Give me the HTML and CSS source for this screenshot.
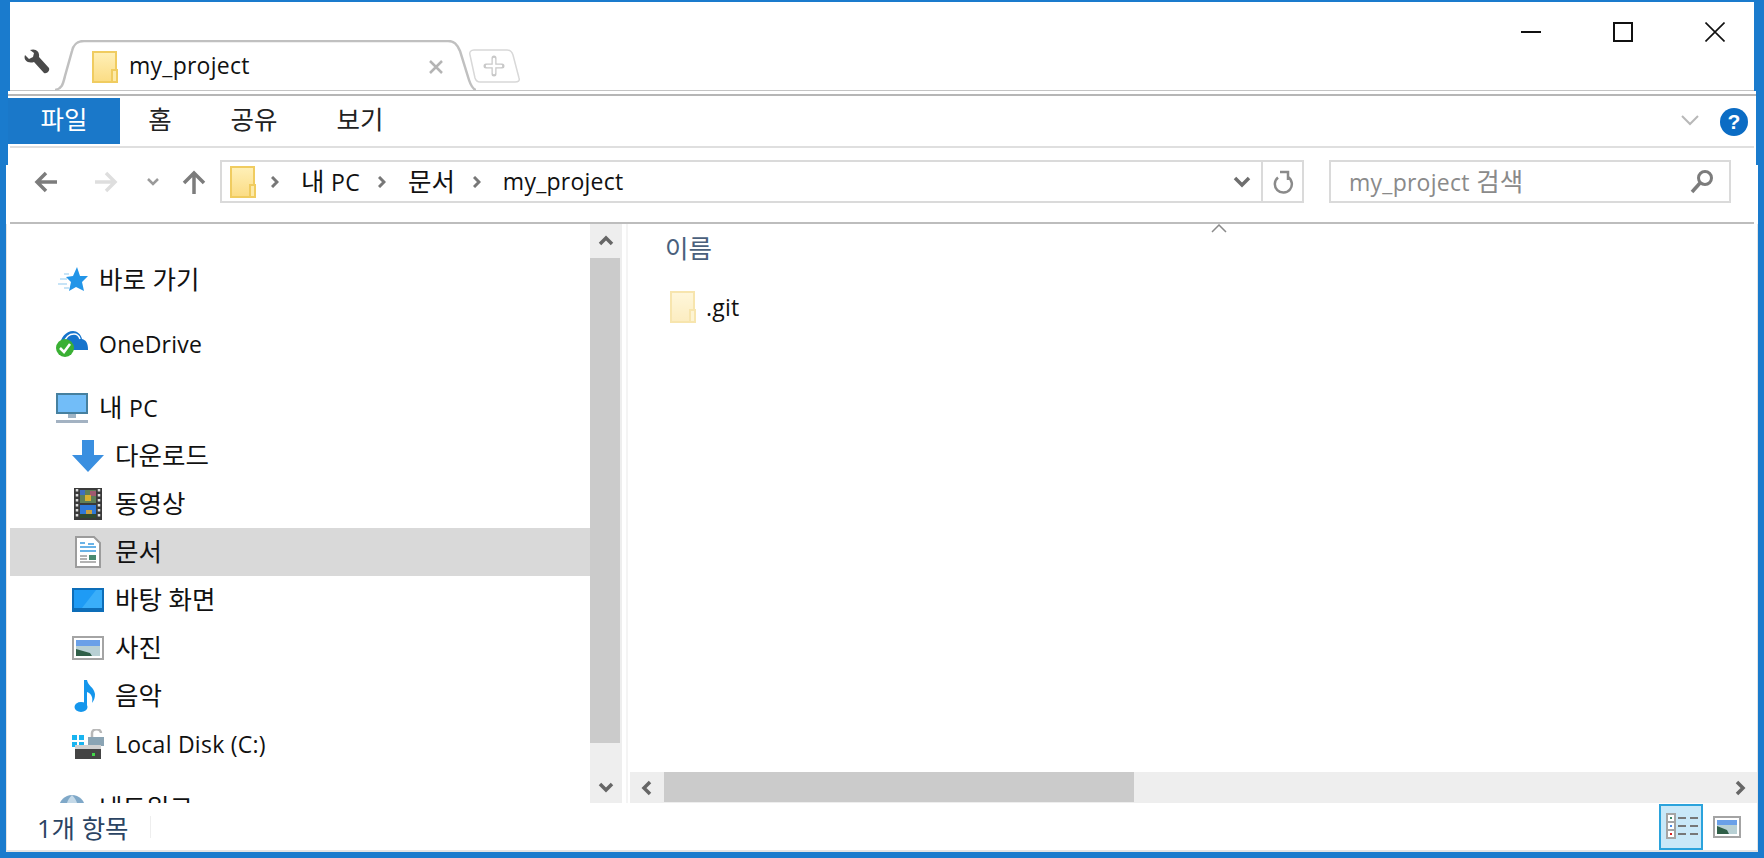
FILE: index.html

```html
<!DOCTYPE html>
<html lang="ko">
<head>
<meta charset="UTF-8" />
<title>my_project</title>
<link rel="stylesheet" href="styles.css">
</head>
<body>

<svg class="defs" width="0" height="0">
  <defs>
    <linearGradient id="folderFill" x1="0" y1="0" x2="0" y2="1">
      <stop offset="0" stop-color="#fff0b8" />
      <stop offset="1" stop-color="#fbdc84" />
    </linearGradient>
    <symbol id="folder" viewBox="0 0 26 32">
      <rect x="1" y="1" width="23" height="30" fill="url(#folderFill)" stroke="#f0cc60" stroke-width="2" />
      <rect x="20" y="19" width="5" height="12" fill="#fdeaa8" stroke="#f0cc60" stroke-width="2" />
    </symbol>
    <symbol id="up" viewBox="0 0 16 16"><polyline points="2,11 8,5 14,11" /></symbol>
    <symbol id="down" viewBox="0 0 16 16"><polyline points="2,5 8,11 14,5" /></symbol>
    <symbol id="left" viewBox="0 0 16 16"><polyline points="11,2 5,8 11,14" /></symbol>
    <symbol id="right" viewBox="0 0 16 16"><polyline points="5,2 11,8 5,14" /></symbol>
  </defs>
</svg>

<div class="window">

  <div class="titlebar">
    <svg class="wrench" width="28" height="28" viewBox="0 0 28 28">
      <path d="M3 7 L7 11 L11 9 L12 5 L8 2 C13 0 18 3 17 9 L27 20 C28 23 25 26 22 25 L12 14 C6 16 1 12 3 7 Z" fill="#4a4a4a" />
    </svg>
    <div class="tab">
      <svg class="tab-shape" width="421" height="51" viewBox="0 0 421 51">
        <path d="M0 50 C7 49 8 44 10 36 L17 11 C19 3 23 1 29 1 L393 1 C399 1 402 4 405 11 L414 40 C416 46 418 49 421 50" fill="#fff" stroke="#c0c0c0" stroke-width="2.5" />
      </svg>
      <svg class="folder-icon" width="26" height="32"><use href="#folder" /></svg>
      <span class="tab-title lat">my_project</span>
      <svg class="tab-close" width="14" height="14" viewBox="0 0 14 14">
        <path d="M1 1 L13 13 M13 1 L1 13" stroke="#b4b4b4" stroke-width="2.5" />
      </svg>
    </div>
    <svg class="new-tab" width="52" height="34" viewBox="0 0 52 34">
      <path d="M2 6 C1 3 3 1 6 1 L39 1 C42 1 44 3 45 6 L51 29 C52 32 50 33 47 33 L12 33 C9 33 8 32 7 29 Z" fill="#fff" stroke="#d8d8d8" stroke-width="1.5" />
      <path d="M26 9 L26 25 M18 17 L34 17" stroke="#c8c8c8" stroke-width="5" stroke-linecap="round" />
      <path d="M26 10 L26 24 M19 17 L33 17" stroke="#fff" stroke-width="2.5" stroke-linecap="round" />
    </svg>
    <div class="win-controls">
      <svg width="20" height="20" viewBox="0 0 20 20"><path d="M0 10 H20" stroke="#111" stroke-width="2" /></svg>
      <svg width="20" height="20" viewBox="0 0 20 20"><rect x="1" y="1" width="18" height="18" fill="none" stroke="#111" stroke-width="2" /></svg>
      <svg width="20" height="20" viewBox="0 0 20 20"><path d="M0.5 0.5 L19.5 19.5 M19.5 0.5 L0.5 19.5" stroke="#111" stroke-width="1.6" /></svg>
    </div>
  </div>

  <div class="strip-gap"></div>

  <div class="ribbon">
    <div class="ribbon-tab active">파일</div>
    <div class="ribbon-tab tab-home">홈</div>
    <div class="ribbon-tab tab-share">공유</div>
    <div class="ribbon-tab tab-view">보기</div>
    <svg class="ribbon-toggle" width="20" height="12" viewBox="0 0 20 12">
      <polyline points="2,2 10,10 18,2" fill="none" stroke="#b8b8b8" stroke-width="2" />
    </svg>
    <div class="help">?</div>
  </div>

  <div class="navbar">
    <svg class="back" width="24" height="22" viewBox="0 0 24 22">
      <path d="M23 11 H4 M12 2 L3 11 L12 20" fill="none" stroke="#7c7c7c" stroke-width="3.5" />
    </svg>
    <svg class="forward" width="24" height="22" viewBox="0 0 24 22">
      <path d="M1 11 H20 M12 2 L21 11 L12 20" fill="none" stroke="#dedede" stroke-width="3.5" />
    </svg>
    <svg class="recent" width="14" height="10" viewBox="0 0 14 10">
      <polyline points="2,2 7,7 12,2" fill="none" stroke="#9a9a9a" stroke-width="2.5" />
    </svg>
    <svg class="upward" width="24" height="24" viewBox="0 0 24 24">
      <path d="M12 24 V4 M2 13 L12 3 L22 13" fill="none" stroke="#7c7c7c" stroke-width="3.5" />
    </svg>

    <div class="address">
      <svg class="folder-icon" width="26" height="32"><use href="#folder" /></svg>
      <svg class="crumb-sep first" width="8" height="12" viewBox="0 0 8 12"><polyline points="1,1 6,6 1,11" /></svg>
      <span class="crumb">내 <span class="lat">PC</span></span>
      <svg class="crumb-sep" width="8" height="12" viewBox="0 0 8 12"><polyline points="1,1 6,6 1,11" /></svg>
      <span class="crumb">문서</span>
      <svg class="crumb-sep" width="8" height="12" viewBox="0 0 8 12"><polyline points="1,1 6,6 1,11" /></svg>
      <span class="crumb lat">my_project</span>
      <svg class="address-drop" width="18" height="12" viewBox="0 0 18 12">
        <polyline points="2,2 9,9 16,2" fill="none" stroke="#6e6e6e" stroke-width="3.5" />
      </svg>
      <div class="refresh">
        <svg width="22" height="24" viewBox="0 0 22 24">
          <path d="M16 7 A8.5 8.5 0 1 1 6 7.5" fill="none" stroke="#8a8a8a" stroke-width="2.5" />
          <path d="M8 2 H16 V10" fill="none" stroke="#8a8a8a" stroke-width="2.5" />
        </svg>
      </div>
    </div>

    <div class="search">
      <span class="search-text"><span class="lat">my_project</span> 검색</span>
      <svg width="24" height="26" viewBox="0 0 24 26">
        <circle cx="15" cy="9" r="6.5" fill="none" stroke="#7c7c7c" stroke-width="3" />
        <path d="M10 14 L2 23" stroke="#7c7c7c" stroke-width="3.5" />
      </svg>
    </div>
  </div>

  <div class="main">

    <div class="sidebar">
      <div class="tree-item group">
        <svg width="32" height="28" viewBox="0 0 32 28">
          <path d="M21 1 L24 10 L32 10 L26 16 L28 25 L20 21 L13 25 L15 16 L10 11 L17 10 Z" fill="#2295e8" />
          <path d="M13 8 H8 M11 13 H4 M11 18 H2 M13 22 H8" stroke="#b5dbf5" stroke-width="1.6" />
        </svg>
        <span>바로 가기</span>
      </div>
      <div class="tree-item group">
        <svg width="32" height="28" viewBox="0 0 32 28">
          <path d="M4 16 C4 8 10 1 17 1 C21 1 25 4 26 9 C30 10 32 13 32 20 H10 Z" fill="#1674cc" />
          <path d="M8 13 C10 6 14 4 18 4 C21 4 23 6 24 9" fill="none" stroke="#fff" stroke-width="1.5" />
          <circle cx="9" cy="18" r="9" fill="#3ab034" />
          <path d="M4 18 L8 22 L14 14" fill="none" stroke="#fff" stroke-width="2.5" />
        </svg>
        <span class="lat">OneDrive</span>
      </div>
      <div class="tree-item group">
        <svg width="32" height="30" viewBox="0 0 32 30">
          <rect x="1" y="1" width="30" height="19" fill="#72bdf8" stroke="#46809f" stroke-width="2" />
          <rect x="12" y="21" width="8" height="4" fill="#9fb4c5" />
          <rect x="0" y="27" width="32" height="3" fill="#a3b2c2" />
        </svg>
        <span>내 <span class="lat">PC</span></span>
      </div>
      <div class="tree-item sub">
        <svg width="32" height="32" viewBox="0 0 32 32">
          <path d="M10 0 H22 V15 H32 L16 32 L0 15 H10 Z" fill="#3a8fe0" />
        </svg>
        <span>다운로드</span>
      </div>
      <div class="tree-item sub">
        <svg class="film" width="28" height="32" viewBox="0 0 28 32">
          <rect width="28" height="32" fill="#3a3a3a" />
          <path d="M3 1 V31 M25 1 V31" stroke="#ddd" stroke-width="2.5" stroke-dasharray="2.5 2.5" />
          <rect x="6" y="2" width="16" height="13" fill="#5f7f58" />
          <rect x="6" y="2" width="5" height="5" fill="#3f6fc0" />
          <rect x="16" y="3" width="6" height="5" fill="#a05a70" />
          <rect x="11" y="7" width="6" height="6" fill="#d8b030" />
          <rect x="6" y="17" width="16" height="13" fill="#2f78d8" />
          <rect x="12" y="22" width="6" height="5" fill="#c8a040" />
          <rect x="6" y="26" width="16" height="4" fill="#304a30" />
        </svg>
        <span>동영상</span>
      </div>
      <div class="tree-item sub selected">
        <svg class="doc" width="26" height="32" viewBox="0 0 26 32">
          <path d="M1 1 H19 L25 7 V31 H1 Z" fill="#fff" stroke="#9c9c9c" stroke-width="2" />
          <path d="M5 7 H10 M13 8 H19 M5 11 H21 M5 15 H21" stroke="#3a9ae0" stroke-width="1.6" />
          <path d="M5 20 H12 M5 23 H12 M5 26 H21" stroke="#9a9a9a" stroke-width="1.6" />
          <rect x="14" y="19" width="7" height="5" fill="#4a8a70" />
        </svg>
        <span>문서</span>
      </div>
      <div class="tree-item sub">
        <svg width="32" height="24" viewBox="0 0 32 24">
          <rect width="32" height="24" fill="#1e9bf5" />
          <path d="M0 24 V20 H32 V24 Z" fill="#0d6db8" />
          <path d="M0 0 H32 V2 H0 Z M0 0 H2 V24 H0 Z M30 0 H32 V24 H30 Z" fill="#0d6db8" />
          <path d="M10 20 L24 2 H30 V20 Z" fill="#3aaef9" />
        </svg>
        <span>바탕 화면</span>
      </div>
      <div class="tree-item sub">
        <svg width="32" height="24" viewBox="0 0 32 24">
          <rect x="1" y="1" width="30" height="22" fill="#fff" stroke="#a4a4a4" stroke-width="2" />
          <rect x="4" y="4" width="24" height="6" fill="#6aa0e8" />
          <rect x="4" y="10" width="24" height="10" fill="#b8d0d4" />
          <path d="M4 13 L18 17 L20 20 H4 Z" fill="#2f5f48" />
        </svg>
        <span>사진</span>
      </div>
      <div class="tree-item sub">
        <svg width="32" height="32" viewBox="0 0 32 32">
          <ellipse cx="9" cy="27" rx="6.5" ry="5" fill="#1496ec" />
          <path d="M12 0 H15 C16 6 22 7 23 14 C23 18 22 20 20 23 C21 18 20 14 15 12 V27 H12 Z" fill="#1496ec" />
        </svg>
        <span>음악</span>
      </div>
      <div class="tree-item sub">
        <svg width="32" height="30" viewBox="0 0 32 30">
          <path d="M0 6 H5 V11 H0 Z M7 6 H12 V11 H7 Z M0 13 H5 V18 H0 Z M7 13 H12 V18 H7 Z" fill="#19b4f0" />
          <rect x="16" y="8" width="16" height="9" fill="#8aa4b4" />
          <path d="M20 8 V4 C20 -1 29 -1 29 4" fill="none" stroke="#b8b8b8" stroke-width="2.5" />
          <rect x="3" y="16" width="26" height="4" fill="#d0d0d0" />
          <rect x="3" y="20" width="26" height="10" fill="#444" />
          <rect x="20" y="24" width="3" height="3" fill="#43d84a" />
        </svg>
        <span class="lat">Local Disk (C:)</span>
      </div>
      <div class="tree-item group">
        <svg width="26" height="26" viewBox="0 0 26 26">
          <circle cx="13" cy="13" r="13" fill="#7fa8c8" />
          <path d="M13 0 C17 4 19 8 18 13 H8 C7 8 9 4 13 0 Z" fill="#c4d9e8" />
        </svg>
        <span>네트워크</span>
      </div>
    </div>

    <div class="vscroll">
      <div class="scroll-btn up-btn"><svg class="arrow" width="16" height="16"><use href="#up" /></svg></div>
      <div class="thumb-v"></div>
      <div class="scroll-btn down-btn"><svg class="arrow" width="16" height="16"><use href="#down" /></svg></div>
    </div>

    <div class="splitter"></div>

    <div class="content">
      <svg class="sort-caret" width="16" height="9" viewBox="0 0 16 9">
        <polyline points="1,8 8,1 15,8" fill="none" stroke="#8a8a8a" stroke-width="1.5" />
      </svg>
      <div class="files">
        <div class="col-header">이름</div>
        <div class="file-row">
          <svg class="folder-icon pale" width="26" height="32"><use href="#folder" /></svg>
          <span class="lat">.git</span>
        </div>
      </div>
      <div class="hscroll">
        <div class="scroll-btn left-btn"><svg class="arrow" width="16" height="16"><use href="#left" /></svg></div>
        <div class="thumb-h"></div>
        <div class="scroll-btn right-btn"><svg class="arrow" width="16" height="16"><use href="#right" /></svg></div>
      </div>
    </div>

  </div>

  <div class="statusbar">
    <span class="count">1개 항목</span>
    <div class="status-sep"></div>
    <div class="view-btn on">
      <svg width="30" height="28" viewBox="0 0 30 28">
        <rect x="0" y="0" width="10" height="26" fill="#a4a4a4" />
        <rect x="2" y="2" width="6" height="6" fill="#fff" />
        <rect x="2" y="10" width="6" height="6" fill="#fff" />
        <rect x="2" y="18" width="6" height="6" fill="#fff" />
        <rect x="4" y="4" width="2" height="2" fill="#3a8a6a" />
        <rect x="4" y="12" width="2" height="2" fill="#4a8ae8" />
        <rect x="4" y="20" width="2" height="2" fill="#d82020" />
        <path d="M12 5 H20 M24 5 H32 M12 13 H20 M24 13 H32 M12 21 H20 M24 21 H32" stroke="#777" stroke-width="2" />
      </svg>
    </div>
    <div class="view-btn">
      <svg width="28" height="22" viewBox="0 0 28 22">
        <rect x="1" y="1" width="26" height="20" fill="#fff" stroke="#a4a4a4" stroke-width="2" />
        <rect x="4" y="4" width="20" height="5" fill="#6aa0e8" />
        <rect x="4" y="9" width="20" height="9" fill="#b8d0d4" />
        <path d="M4 10 L14 14 L16 18 H4 Z" fill="#2f5f48" />
      </svg>
    </div>
  </div>

</div>

</body>
</html>
```

FILE: styles.css

```css
* { box-sizing: border-box; }
html, body { margin: 0; height: 100%; }
body { font-family: "Open Sans", "Noto Sans CJK KR", sans-serif; font-size: 25.5px; color: #111; overflow: hidden; }
svg { display: block; flex: none; }
.defs { position: absolute; }
.lat { font-size: 23px; letter-spacing: .25px; }

.window { width: 1764px; height: 858px; display: flex; flex-direction: column; padding: 2px 0 6px; background: #1a7bcd; }

/* title bar with the tabs */
.titlebar { height: 89px; margin: 0 10px; background: #fff; border-bottom: 1px solid #c4c4c4; display: flex; align-items: flex-end; flex: none; }
.wrench { margin: 0 0 14px 12px; }
.tab { position: relative; width: 421px; height: 51px; margin-left: 5px; margin-bottom: -1px; display: flex; align-items: center; padding: 0 0 0 37px; }
.tab-shape { position: absolute; left: 0; top: 0; }
.tab .folder-icon { position: relative; margin-top: 2px; }
.tab-title { position: relative; margin-left: 11px; width: 292px; margin-top: -1px; }
.tab-close { position: relative; margin-left: 8px; margin-top: 2px; }
.new-tab { margin: 0 0 7px -8px; }
.win-controls { display: flex; gap: 72px; margin: 0 29px 48px auto; }
.strip-gap { height: 5px; margin: 0 8px; background: #fff; border-bottom: 2px solid #b6b6b6; flex: none; }

/* ribbon */
.ribbon { height: 52px; margin: 0 8px; background: #fff linear-gradient(#dfdfdf, #dfdfdf) center bottom / calc(100% - 4px) 2px no-repeat; display: flex; align-items: flex-start; flex: none; }
.ribbon-tab { height: 46px; margin-top: 2px; line-height: 42px; text-align: center; color: #222; }
.ribbon-tab.active { width: 112px; background: #1a78c9; color: #fff; }
.tab-home { width: 80px; }
.tab-share { width: 108px; }
.tab-view { width: 104px; }
.ribbon-toggle { margin: 18px 0 0 auto; }
.help { width: 28px; height: 28px; margin: 12px 8px 0 20px; border-radius: 50%; background: #0b6cc4; color: #fff; font: bold 21px/28px "Liberation Sans", sans-serif; text-align: center; }

/* back, forward, address and search */
.navbar { height: 76px; margin: 0 6px; display: flex; align-items: center; flex: none; padding-bottom: 9px;
  background:
    linear-gradient(#bdbdbd, #bdbdbd) center bottom / calc(100% - 8px) 2px no-repeat,
    linear-gradient(#1a7bcd, #1a7bcd) left top / 2px 17px no-repeat,
    linear-gradient(#1a7bcd, #1a7bcd) right top / 2px 17px no-repeat,
    #fff; }
.back { margin-left: 28px; }
.forward { margin-left: 36px; }
.recent { margin-left: 28px; }
.upward { margin-left: 22px; }
.address { width: 1084px; height: 43px; margin-left: 14px; border: 2px solid #dadada; display: flex; align-items: center; padding-left: 8px; }
.crumb-sep { margin: 0 22px 0 18px; fill: none; stroke: #777; stroke-width: 3; }
.crumb-sep.first { margin-left: 15px; }
.crumb { line-height: 39px; white-space: nowrap; }
.address-drop { margin-left: auto; }
.refresh { width: 41px; height: 100%; margin-left: 10px; border-left: 2px solid #dadada; display: flex; align-items: center; justify-content: center; }
.search { width: 402px; height: 43px; margin-left: 25px; border: 2px solid #dadada; display: flex; align-items: center; justify-content: space-between; padding: 0 15px 0 18px; }
.search-text { color: #8a8a8a; line-height: 39px; }

/* sidebar and file list */
.main { flex: 1; min-height: 0; margin: 0 6px; background: #fff; border: solid #e4e4e4; border-width: 0 1px; display: flex; }
.sidebar { width: 583px; flex: none; overflow: hidden; padding: 32px 0 0 3px; }
.tree-item { height: 48px; display: flex; align-items: center; gap: 11px; white-space: nowrap; }
.tree-item > span { margin-top: -6px; }
.tree-item > span.lat { margin-top: 0; }
.tree-item svg { width: 32px; }
.tree-item.group { padding-left: 46px; margin-bottom: 16px; }
.tree-item.sub { padding-left: 62px; }
.tree-item.sub + .group { margin-top: 16px; }
.tree-item.group + .sub { margin-top: -16px; }
.tree-item.selected { background: #d9d9d9; }
.tree-item .film { width: 28px; margin: 0 2px; }
.tree-item .doc { width: 26px; margin: 0 3px; }

.vscroll { width: 32px; flex: none; background: #eee; display: flex; flex-direction: column; }
.scroll-btn { display: flex; align-items: center; justify-content: center; flex: none; }
.up-btn { height: 34px; }
.down-btn { height: 60px; align-items: flex-end; padding-bottom: 8px; }
.thumb-v { flex: 1; width: 30px; background: #cbcbcb; }
.arrow { fill: none; stroke: #666; stroke-width: 3.5; }

.splitter { width: 8px; flex: none; background: #fff; }
.splitter::after { content: ""; display: block; width: 2px; height: 100%; margin-left: 4px; background: #f4f4f4; }

.content { flex: 1; min-width: 0; position: relative; display: flex; flex-direction: column; }
.sort-caret { position: absolute; left: 581px; top: 0; }
.files { flex: 1; padding: 8px 0 0 35px; }
.col-header { height: 32px; line-height: 32px; color: #4a607c; }
.file-row { display: flex; align-items: center; gap: 10px; height: 48px; margin-top: 19px; padding-left: 5px; }
.pale { opacity: .5; }
.hscroll { height: 31px; flex: none; background: #eee; display: flex; }
.left-btn { width: 34px; }
.right-btn { width: 34px; margin-left: auto; }
.thumb-h { width: 470px; height: 30px; background: #cbcbcb; }

/* status bar */
.statusbar { height: 49px; margin: 0 6px; background: #fff; border: solid #e4e4e4; border-width: 0 1px 2px; display: flex; align-items: center; flex: none; }
.count { margin-left: 30px; color: #2b4463; }
.status-sep { width: 1px; height: 22px; margin-left: 21px; background: #eee; }
.view-btn { width: 44px; height: 46px; display: flex; align-items: center; justify-content: center; }
.view-btn.on { margin-left: auto; background: #c9e8f8; border: 2px solid #2ba3dc; }
.view-btn.on svg { width: 32px; overflow: visible; }
.view-btn:last-child { width: 52px; padding-right: 8px; margin-left: 2px; }
```
